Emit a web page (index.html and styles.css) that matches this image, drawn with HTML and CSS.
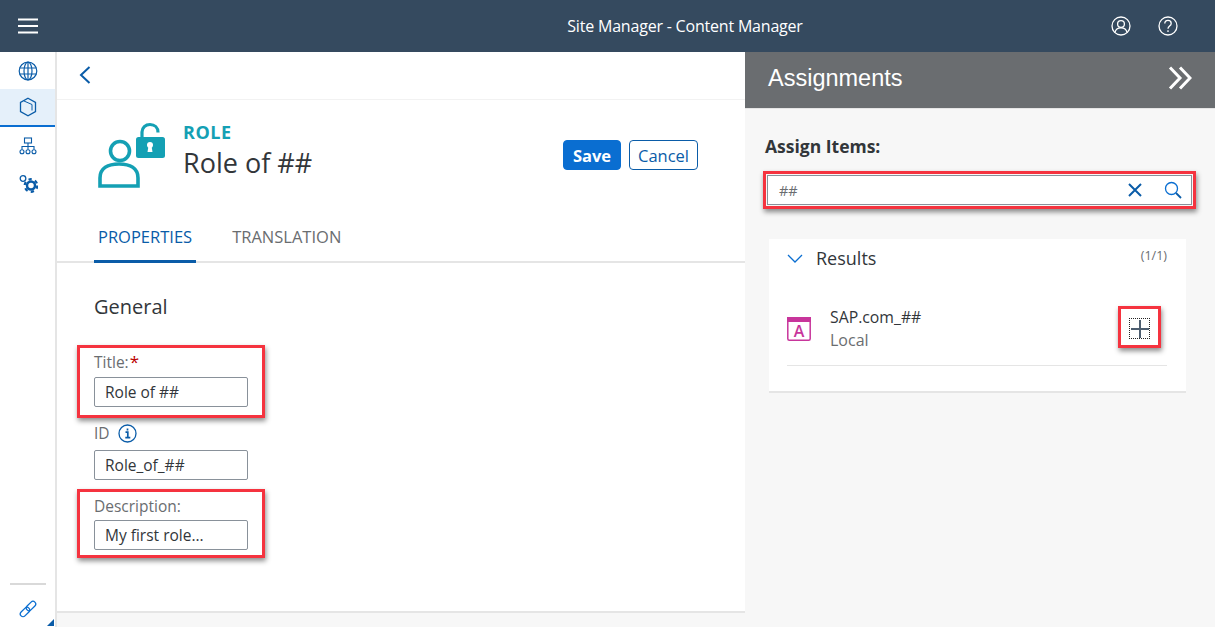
FILE: index.html
```html
<!DOCTYPE html>
<html lang="en">

    <head>
        <meta charset="UTF-8">
        <meta name="viewport" content="width=device-width, initial-scale=1.0">
        <title>Site Manager - Content Manager</title>
        <link rel="stylesheet" href="styles.css">
    </head>

    <body>

        <header class="shell-bar">
            <button class="shell-btn menu-btn" aria-label="Menu">
                <svg width="20" height="16" viewBox="0 0 20 16"><path d="M0 1.500h20M0 8h20M0 14.500h20" stroke="#fff" stroke-width="2" fill="none"/></svg>
            </button>
            <div class="shell-title">Site Manager - Content Manager</div>
            <div class="shell-actions">
                <svg width="20" height="20" viewBox="0 0 20 20" fill="none" stroke="#fff" stroke-width="1.300"><circle cx="10" cy="10" r="9"/><circle cx="10" cy="8" r="3.400"/><path d="M4 16.500c.6-3.400 3-4.700 6-4.700s5.400 1.300 6 4.700"/></svg>
                <svg width="20" height="20" viewBox="0 0 20 20" fill="none" stroke="#fff" stroke-width="1.300"><circle cx="10" cy="10" r="9"/><path d="M6.800 7.600c0-2 1.400-3.200 3.200-3.200s3.200 1.200 3.200 3c0 2.700-3.200 2.700-3.200 5.400"/><path d="M10 14.300v1.700"/></svg>
            </div>
        </header>

        <div class="shell-body">

            <nav class="side-nav">
                <div class="nav-item">
                    <svg width="20" height="20" viewBox="0 0 20 20" fill="none" stroke="#0a5ca8" stroke-width="1.200"><circle cx="10" cy="10" r="8.800"/><ellipse cx="10" cy="10" rx="4" ry="8.800"/><path d="M1.500 7h17M1.500 13h17M10 1.200v17.600"/></svg>
                </div>
                <div class="nav-item selected">
                    <svg width="18" height="20" viewBox="0 0 18 20" fill="none" stroke="#0a5ca8" stroke-width="1.300"><path d="M9 1.200l7.500 4.300v9L9 18.800l-7.500-4.300v-9z"/><path d="M5 4l8 3.500v6" stroke-width="1"/></svg>
                </div>
                <div class="nav-item">
                    <svg width="18" height="18" viewBox="0 0 18 18" fill="none" stroke="#0a5ca8" stroke-width="1.100"><rect x="5.500" y="1" width="7" height="5"/><path d="M9 6v3.500M3 12.500V9.500h12v3M9 9.500v3"/><circle cx="3" cy="14.800" r="2"/><circle cx="9" cy="14.800" r="2"/><circle cx="15" cy="14.800" r="2"/></svg>
                </div>
                <div class="nav-item">
                    <svg width="20" height="20" viewBox="0 0 20 20" fill="none" stroke="#0a5ca8"><circle cx="5" cy="4.500" r="2.800" stroke-width="1.300"/><circle cx="13" cy="11.500" r="4" stroke-width="2.500"/><circle cx="13" cy="11.500" r="6.300" stroke-width="2.200" stroke-dasharray="3.300 3.300"/></svg>
                </div>
                <div class="nav-bottom">
                    <div class="nav-rule"></div>
                    <svg class="link-icon" width="18" height="18" viewBox="0 0 18 18" fill="none" stroke="#0a6ed1" stroke-width="1.300"><rect x="0.500" y="9.300" width="11" height="5.400" rx="2.700" transform="rotate(-45 6 12)"/><rect x="6.500" y="3.300" width="11" height="5.400" rx="2.700" transform="rotate(-45 12 6)"/></svg>
                    <span class="corner-mark"></span>
                </div>
            </nav>

            <main class="editor">
                <div class="back-bar">
                    <svg class="back-icon" width="12" height="18" viewBox="0 0 12 18" fill="none" stroke="#0a5ca8" stroke-width="2"><path d="M10.500 1L2 9l8.500 8"/></svg>
                </div>

                <div class="page-head">
                    <svg class="role-icon" width="68" height="66" viewBox="0 0 68 66" fill="none" stroke="#14a0b4">
                        <circle cx="22" cy="29" r="9.500" stroke-width="3.600"/>
                        <path d="M2 64V56c0-10 8-14 19-14s19 4 19 14v8z" stroke-width="3.600"/>
                        <path d="M44 15V10c0-4.500 3.500-7.500 8-7.500s8 3 8 8" stroke-width="3.200"/>
                        <rect x="38" y="15" width="29" height="21" rx="2.500" fill="#14a0b4" stroke="none"/>
                        <circle cx="52" cy="23" r="3" fill="#fff" stroke="none"/>
                        <path d="M50.500 24h3l1 6h-5z" fill="#fff" stroke="none"/>
                    </svg>
                    <div class="page-titles">
                        <div class="page-kind">ROLE</div>
                        <h1 class="page-name">Role of ##</h1>
                    </div>
                    <div class="page-actions">
                        <button class="btn btn-save">Save</button>
                        <button class="btn btn-cancel">Cancel</button>
                    </div>
                </div>

                <div class="tabs">
                    <div class="tab active">PROPERTIES</div>
                    <div class="tab">TRANSLATION</div>
                </div>

                <section class="general">
                    <h2 class="section-title">General</h2>

                    <div class="field marked title-field">
                        <label class="field-label">Title:<span class="req">*</span></label>
                        <input class="text-input" value="Role of ##">
                    </div>

                    <div class="field id-field">
                        <label class="field-label">ID
                            <svg class="info-icon" width="19" height="19" viewBox="0 0 19 19" fill="none" stroke="#0a5ca8"><circle cx="9.500" cy="9.500" r="8.500" stroke-width="1.300"/><path d="M7.500 8.200h2.300v5.300M7.300 13.700h5M9.500 4.500v2" stroke-width="1.700"/></svg>
                        </label>
                        <input class="text-input" value="Role_of_##">
                    </div>

                    <div class="field marked desc-field">
                        <label class="field-label">Description:</label>
                        <input class="text-input" value="My first role...">
                    </div>
                </section>

                <div class="editor-footer"></div>
            </main>

            <aside class="assign-panel">
                <div class="assign-head">
                    <span class="assign-title">Assignments</span>
                    <svg width="24" height="24" viewBox="0 0 24 24" fill="none" stroke="#fff" stroke-width="3"><path d="M2 1.500L12 12 2 22.500M12 1.500L22 12 12 22.500"/></svg>
                </div>

                <div class="assign-body">
                    <div class="assign-label">Assign Items:</div>

                    <div class="search-box">
                        <span class="search-text">##</span>
                        <svg class="clear-icon" width="14" height="14" viewBox="0 0 14 14" fill="none" stroke="#0a5ca8" stroke-width="2"><path d="M1 1l12 12M13 1L1 13"/></svg>
                        <svg width="18" height="18" viewBox="0 0 18 18" fill="none" stroke="#0a6ed1" stroke-width="1.300"><circle cx="7.500" cy="7.500" r="6"/><path d="M12 12l5 5" stroke="#0a5ca8" stroke-width="1.800"/></svg>
                    </div>

                    <div class="results-card">
                        <div class="results-head">
                            <svg width="16" height="9" viewBox="0 0 16 9" fill="none" stroke="#0a6ed1" stroke-width="1.300"><path d="M1 1l7 7 7-7"/></svg>
                            <span class="results-title">Results</span>
                            <span class="results-count">(1/1)</span>
                        </div>

                        <div class="result-row">
                            <svg width="24" height="24" viewBox="0 0 24 24" fill="none"><rect x="0.800" y="0.800" width="22.400" height="22.400" rx="1.500" stroke="#c8359b" stroke-width="1.500"/><rect x="0" y="0" width="24" height="5" fill="#c8359b"/><text x="12" y="20" text-anchor="middle" class="app-letter">A</text></svg>
                            <div class="result-text">
                                <div class="result-name">SAP.com_##</div>
                                <div class="result-sub">Local</div>
                            </div>
                            <button class="add-btn" aria-label="Add">
                                <svg width="18" height="18" viewBox="0 0 18 18" fill="none" stroke="#4d5e70" stroke-width="2"><path d="M9 0v18M0 9h18"/></svg>
                            </button>
                        </div>
                    </div>
                </div>
            </aside>

        </div>

    </body>

</html>
```
FILE: styles.css
```css
* {
    box-sizing: border-box;
}

html,
body {
    margin: 0;
    padding: 0;
    height: 627px;
    overflow: hidden;
}

body {
    font-family: "Open Sans", "Noto Sans", sans-serif;
    color: #32363a;
    background-color: #fff;
    display: flex;
    flex-direction: column;
}

.shell-bar {
    height: 52px;
    flex: none;
    background-color: #354a5f;
    display: flex;
    align-items: center;
}

.shell-btn {
    background: none;
    border: none;
    padding: 0;
}

.menu-btn {
    margin-left: 18px;
    display: flex;
}

.shell-title {
    flex: 1;
    padding-left: 221px;
    text-align: center;
    color: #fff;
    font-size: 16px;
    letter-spacing: -0.2px;
}

.shell-actions {
    display: flex;
    gap: 27px;
    margin-right: 37px;
}

.shell-body {
    flex: 1;
    display: flex;
    min-height: 0;
}

/* left navigation */
.side-nav {
    width: 57px;
    flex: none;
    border-right: 2px solid #e5e5e5;
    display: flex;
    flex-direction: column;
}

.nav-item {
    height: 38px;
    display: flex;
    align-items: center;
    justify-content: center;
}

.nav-item:first-child {
    height: 37px;
}

.nav-item.selected {
    background-color: #e5f0fa;
    border-bottom: 2px solid #0a6ed1;
}

.nav-bottom {
    margin-top: auto;
    height: 44px;
    position: relative;
    display: flex;
    flex-direction: column;
    align-items: center;
}

.nav-rule {
    width: 36px;
    height: 2px;
    background-color: #d9d9d9;
    margin-bottom: 15px;
}

.corner-mark {
    position: absolute;
    right: 1px;
    bottom: 1px;
    width: 0;
    height: 0;
    border-style: solid;
    border-width: 0 0 7px 7px;
    border-color: transparent transparent #0a5ca8 transparent;
}

/* main editor */
.editor {
    flex: none;
    width: 688px;
    display: flex;
    flex-direction: column;
}

.back-bar {
    height: 48px;
    flex: none;
    padding-left: 22px;
    display: flex;
    align-items: center;
    border-bottom: 1px solid #f2f2f2;
}

.back-icon {
    margin-bottom: 2px;
}

.page-head {
    height: 113px;
    flex: none;
    padding: 22px 47px 0 41px;
    display: flex;
    align-items: flex-start;
}

.role-icon {
    flex: none;
}

.page-titles {
    margin-left: 17px;
    margin-top: -1px;
    flex: 1;
}

.page-kind {
    color: #14a0b4;
    font-size: 18px;
    font-weight: 700;
    line-height: 22px;
    letter-spacing: 0.5px;
}

.page-name {
    margin: 3px 0 0;
    font-size: 27px;
    font-weight: 400;
    line-height: 34px;
}

.page-actions {
    display: flex;
    gap: 8px;
    margin-top: 18px;
}

.btn {
    height: 30px;
    border-radius: 4px;
    font-family: inherit;
    font-size: 16.500px;
    padding: 0;
}

.btn-save {
    width: 58px;
    background-color: #0a6ed1;
    border: 1px solid #0a6ed1;
    color: #fff;
    font-weight: 700;
}

.btn-cancel {
    width: 69px;
    background-color: #fff;
    border: 1px solid #0a5ca8;
    color: #0a5ca8;
}

.tabs {
    height: 50px;
    flex: none;
    padding-left: 37px;
    display: flex;
    gap: 32px;
    border-bottom: 2px solid #e5e5e5;
}

.tab {
    padding: 12px 4px 0;
    height: 50px;
    font-size: 16.500px;
    color: #6a6d70;
}

.tab.active {
    color: #0a5ca8;
    border-bottom: 3px solid #0a5ca8;
}

.general {
    flex: 1;
    padding: 29px 0 0 37px;
}

.section-title {
    margin: 0 0 30px;
    font-size: 20px;
    font-weight: 400;
    line-height: 30px;
}

.field {
    width: 154px;
    position: relative;
}

.id-field,
.desc-field {
    margin-top: 16px;
}

/* red annotation boxes drawn over the form */
.marked::after {
    content: "";
    position: absolute;
    left: -17px;
    right: -17px;
    top: -7px;
    bottom: -11px;
    border: 3px solid #f5333f;
    box-shadow: 1px 3px 5px rgba(0, 0, 0, 0.45);
    pointer-events: none;
}

.desc-field::after {
    bottom: -8px;
}

.field-label {
    display: flex;
    align-items: center;
    height: 20px;
    font-size: 15.500px;
    color: #6a6d70;
    margin-bottom: 5px;
}

.id-field .field-label {
    margin-bottom: 7px;
}

.desc-field .field-label {
    margin-bottom: 4px;
}

.req {
    color: #bb0000;
    font-size: 17px;
    line-height: 14px;
    margin-left: 1px;
}

.info-icon {
    margin-left: 8px;
}

.text-input {
    display: block;
    width: 100%;
    height: 30px;
    padding: 0 10px;
    border: 1px solid #89919a;
    border-radius: 2px;
    font-family: inherit;
    font-size: 15.500px;
    color: #32363a;
    background-color: #fff;
}

.editor-footer {
    height: 16px;
    flex: none;
    background-color: #f7f7f7;
    border-top: 2px solid #e5e5e5;
}

/* assignments panel */
.assign-panel {
    flex: 1;
    background-color: #f7f7f7;
    display: flex;
    flex-direction: column;
}

.assign-head {
    height: 57px;
    flex: none;
    background-color: #6a6d70;
    padding: 0 23px 4px 23px;
    padding-right: 23px;
    display: flex;
    align-items: center;
    justify-content: space-between;
    border-bottom: 1px solid #e5e5e5;
}

.assign-head svg {
    margin-right: 6px;
}

.assign-title {
    font-family: "Liberation Sans", Arial, sans-serif;
    font-size: 23.500px;
    color: #fff;
}

.assign-body {
    padding: 26px 29px 0 20px;
}

.assign-label {
    font-size: 17.500px;
    font-weight: 700;
    line-height: 22px;
}

.search-box {
    position: relative;
    margin: 18px 0 0 2px;
    height: 30px;
    width: 425px;
    background-color: #fff;
    border: 1px solid #89919a;
    display: flex;
    align-items: center;
    padding: 0 9px 0 11px;
}

.search-box::after {
    content: "";
    position: absolute;
    left: -5px;
    right: -5px;
    top: -5px;
    bottom: -5px;
    border: 3px solid #f5333f;
    box-shadow: 1px 3px 5px rgba(0, 0, 0, 0.45);
    pointer-events: none;
}

.search-text {
    flex: 1;
    font-size: 14.500px;
    color: #6a6d70;
}

.clear-icon {
    margin-right: 22px;
}

.results-card {
    margin: 34px 6px 0 4px;
    height: 154px;
    background-color: #fff;
    border-bottom: 2px solid #e5e5e5;
    padding: 0 19px 0 18px;
}

.results-head {
    display: flex;
    align-items: center;
    height: 38px;
}

.results-title {
    margin-left: 13px;
    flex: 1;
    font-size: 18px;
}

.results-count {
    font-size: 12.500px;
    color: #6a6d70;
    margin-bottom: 6px;
}

.result-row {
    height: 89px;
    display: flex;
    align-items: center;
    padding-top: 15px;
    border-bottom: 1px solid #e5e5e5;
}

.app-letter {
    font-family: "Open Sans", sans-serif;
    font-size: 16px;
    font-weight: 600;
    fill: #c8359b;
}

.result-text {
    margin-left: 19px;
    flex: 1;
}

.result-name {
    font-size: 15.800px;
    line-height: 22px;
}

.result-sub {
    font-size: 16px;
    line-height: 24px;
    color: #6a6d70;
}

.add-btn {
    position: relative;
    width: 21px;
    height: 21px;
    margin-right: 17px;
    padding: 0;
    background: none;
    border: 1px dotted #222;
    display: flex;
    align-items: center;
    justify-content: center;
}

.add-btn::after {
    content: "";
    position: absolute;
    left: -12px;
    right: -12px;
    top: -13px;
    bottom: -10px;
    border: 3px solid #f5333f;
    box-shadow: 1px 3px 5px rgba(0, 0, 0, 0.45);
}
```
